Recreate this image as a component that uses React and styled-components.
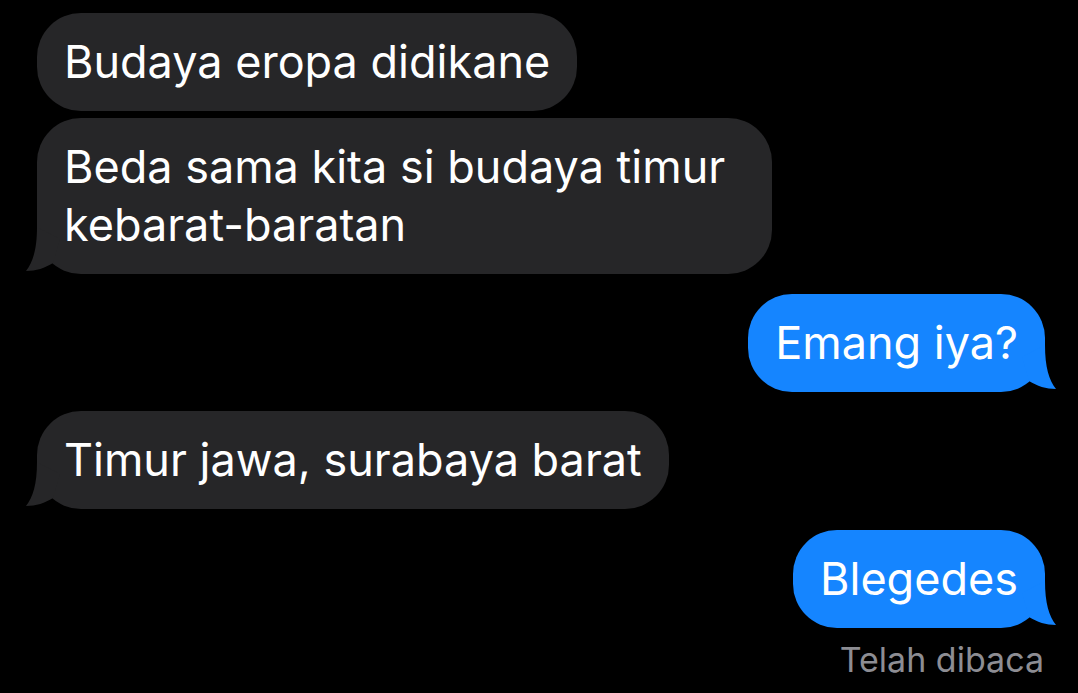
import React from 'react';
import styled, { createGlobalStyle } from 'styled-components';

const Global = createGlobalStyle`
  html, body { margin: 0; padding: 0; background: #000; }
  body {
    font-family: Inter, "Noto Sans", sans-serif;
    -webkit-font-smoothing: antialiased;
  }
`;

const Thread = styled.div`
  display: flex;
  flex-direction: column;
  box-sizing: border-box;
  min-height: 693px;
  padding: 13px 33px 0 37px;
  background: #000;
`;

const Bubble = styled.div`
  position: relative;
  align-self: ${(p) => (p.$me ? 'flex-end' : 'flex-start')};
  max-width: 681px;
  margin-top: ${(p) => p.$gap || 0}px;
  padding: 20px 27px 20px;
  border-radius: 44px;
  background: ${(p) => (p.$me ? '#1585ff' : '#262628')};
  color: #fff;
  font-size: 45px;
  line-height: 58px;
`;

const TailSvg = styled.svg`
  position: absolute;
  bottom: 0;
  width: 40px;
  height: 50px;
  ${(p) => (p.$me ? 'right: -12px; transform: scaleX(-1);' : 'left: -12px;')}
`;

const Status = styled.div`
  align-self: flex-end;
  margin-top: 12px;
  margin-right: 1px;
  font-size: 34px;
  line-height: 40px;
  color: #8d8d93;
`;

const Tail = ({ me }) => (
  <TailSvg $me={me} viewBox="0 0 40 50">
    <path
      d="M12 3 C12 25 8 38 1 47 C11 47 20 44 28 39 L35 15 Z"
      fill={me ? '#1585ff' : '#262628'}
    />
  </TailSvg>
);

const messages = [
  { text: 'Budaya eropa didikane', me: false, gap: 0, tail: false },
  { text: 'Beda sama kita si budaya timur kebarat-baratan', me: false, gap: 7, tail: true },
  { text: 'Emang iya?', me: true, gap: 20, tail: true },
  { text: 'Timur jawa, surabaya barat', me: false, gap: 19, tail: true },
  { text: 'Blegedes', me: true, gap: 21, tail: true },
];

export default function App() {
  return (
    <>
      <Global />
      <Thread>
        {messages.map((m, i) => (
          <Bubble key={i} $me={m.me} $gap={m.gap}>
            {m.text}
            {m.tail && <Tail me={m.me} />}
          </Bubble>
        ))}
        <Status>Telah dibaca</Status>
      </Thread>
    </>
  );
}
